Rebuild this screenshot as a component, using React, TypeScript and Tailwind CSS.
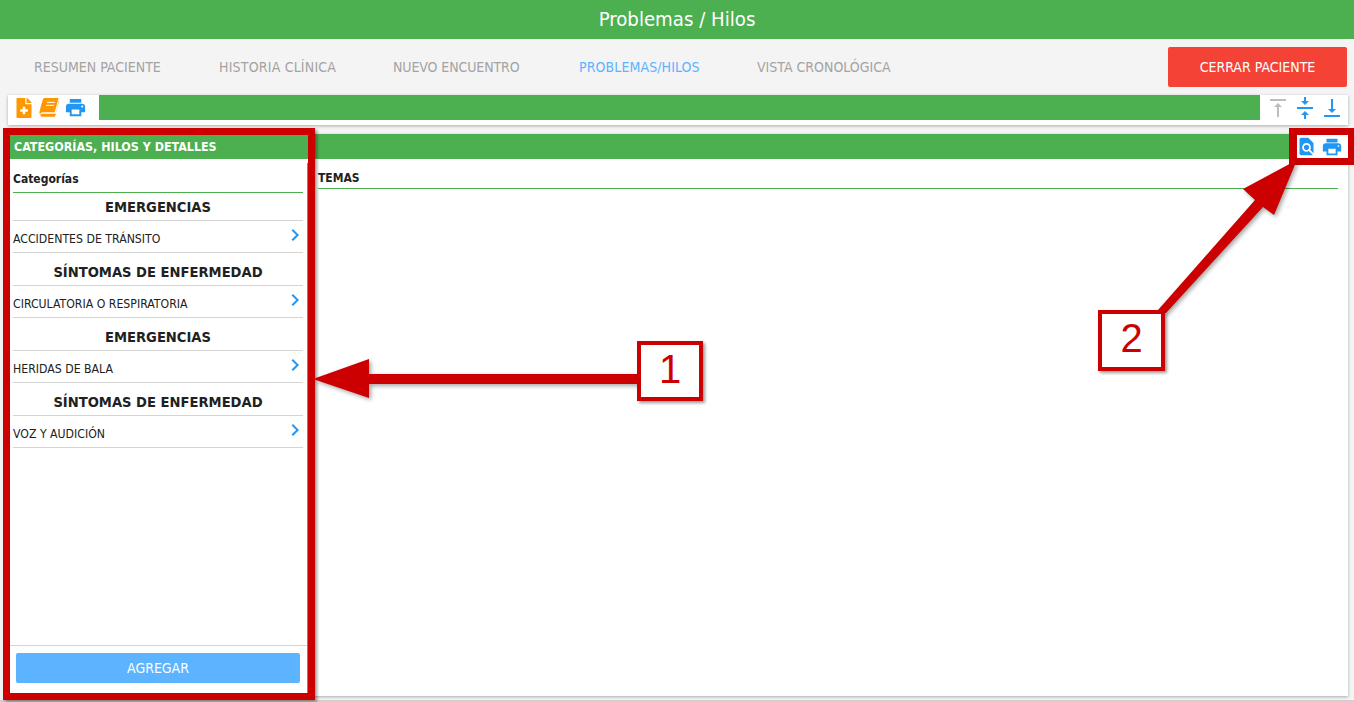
import React from "react";
import { FaFileMedical } from "react-icons/fa";
import {
  MdChevronRight,
  MdFindInPage,
  MdPrint,
  MdVerticalAlignBottom,
  MdVerticalAlignCenter,
  MdVerticalAlignTop,
} from "react-icons/md";

const tabs = [
  { label: "RESUMEN PACIENTE", width: "w-[185px]" },
  { label: "HISTORIA CLÍNICA", width: "w-[174px]", track: "tracking-[0.2px]" },
  { label: "NUEVO ENCUENTRO", width: "w-[186px]", track: "tracking-[-0.1px]" },
  { label: "PROBLEMAS/HILOS", width: "w-[178px]", active: true, track: "tracking-[0.1px]" },
  { label: "VISTA CRONOLÓGICA", width: "w-[160px]" },
];

const groups = [
  { title: "EMERGENCIAS", item: "ACCIDENTES DE TRÁNSITO" },
  { title: "SÍNTOMAS DE ENFERMEDAD", item: "CIRCULATORIA O RESPIRATORIA" },
  { title: "EMERGENCIAS", item: "HERIDAS DE BALA" },
  { title: "SÍNTOMAS DE ENFERMEDAD", item: "VOZ Y AUDICIÓN" },
];

// slanted book, the icon package's one stands upright
const BookIcon = () => (
  <svg viewBox="0 0 60 57" className="ml-[7px] h-[19px] w-[20px] shrink-0 text-[#ff9800]" fill="currentColor">
    <path d="M16 0 H59 L47 43 H12 Q5 43 3 50 Q0 45 2 38 L11 6 Q13 0 16 0 Z" />
    <path d="M59 8 L60 10 L48 56 H10 Q3 56 4 51 Q5 47 12 47 H50 Z" />
    <path d="M24 13 H48 M21 22 H45" stroke="#fff" strokeWidth="3" fill="none" />
  </svg>
);

const App = () => {
  return (
    <div className="relative h-[702px] w-full overflow-hidden bg-white font-['DejaVu_Sans_Condensed','DejaVu_Sans',sans-serif] text-[#212121]">
      {/* Header */}
      <div className="flex h-[39px] items-center justify-center bg-[#4caf50] text-[20.2px] text-white">
        Problemas / Hilos
      </div>

      {/* Tabs */}
      <div className="flex h-[56px] items-center bg-[#f4f4f4] pl-[34px] pr-[7px]">
        {tabs.map((tab) => (
          <div
            key={tab.label}
            className={`${tab.width} ${tab.track ?? ""} text-[14px] ${tab.active ? "text-[#5cb3ff]" : "text-[#a3a3a3]"}`}
          >
            {tab.label}
          </div>
        ))}
        <button className="ml-auto h-[40px] w-[179px] rounded-[2px] bg-[#f44336] text-[14px] text-white">
          CERRAR PACIENTE
        </button>
      </div>

      <div className="h-[607px] border-b-2 border-[#d0d0d0] bg-[#f4f4f4] pl-[8px] pr-[6px]">
        {/* Toolbar */}
        <div className="flex h-[30px] bg-white shadow-[0_1px_3px_rgba(0,0,0,0.3)]">
          <div className="flex h-[25px] w-[91px] items-center pl-[8px]">
            <FaFileMedical className="h-[20px] w-[16px] shrink-0 text-[#ff9800]" />
            <BookIcon />
            <MdPrint className="ml-[5px] h-[23px] w-[23px] shrink-0 text-[#2196f3]" />
          </div>
          <div className="h-[25px] flex-1 bg-[#4caf50]" />
          <div className="flex h-[25px] w-[88px] items-center gap-[3px] pl-[6px]">
            <MdVerticalAlignTop className="h-[24px] w-[24px] text-[#bdbdbd]" />
            <MdVerticalAlignCenter className="h-[24px] w-[24px] text-[#2196f3]" />
            <MdVerticalAlignBottom className="h-[24px] w-[24px] text-[#2196f3]" />
          </div>
        </div>

        {/* Main card */}
        <div className="mt-[9px] flex h-[562px] flex-col bg-white shadow-[0_1px_3px_rgba(0,0,0,0.3)]">
          <div className="flex h-[25px] shrink-0">
            <div className="flex flex-1 items-center bg-[#4caf50] pl-[6px] pt-[1px] text-[12.4px] font-bold text-white">
              CATEGORÍAS, HILOS Y DETALLES
            </div>
            <div className="flex w-[56px] items-center justify-end gap-[4px] bg-white pr-[5px]">
              <MdFindInPage className="h-[21px] w-[21px] text-[#2196f3]" />
              <MdPrint className="h-[22px] w-[22px] text-[#2196f3]" />
            </div>
          </div>

          <div className="flex min-h-0 flex-1">
            {/* Left column */}
            <div className="mt-[4px] flex w-[300px] shrink-0 flex-col border-r border-[#4caf50]">
              <div className="ml-[5px] mr-[4px] flex h-[30px] items-center border-b border-[#4caf50] pt-[2px] text-[12px] font-bold">
                Categorías
              </div>
              <div className="flex-1 pl-[5px] pr-[4px]">
                {groups.map((group, i) => (
                  <div key={i}>
                    <div className="flex h-[28px] items-center justify-center border-b border-[#d4d4d4] text-[14.6px] font-bold">
                      {group.title}
                    </div>
                    <div className="flex h-[32px] items-center justify-between border-b border-[#d4d4d4] text-[12.2px]">
                      <span className="pt-[5px]">{group.item}</span>
                      <MdChevronRight className="mb-[4px] mr-[-4px] h-[24px] w-[24px] text-[#2196f3]" />
                    </div>
                    <div className="h-[5px]" />
                  </div>
                ))}
              </div>
              <div className="flex h-[51px] border-t border-[#d4d4d4] pb-[13px] pl-[8px] pr-[7px] pt-[7px]">
                <button className="h-[30px] w-full rounded-[2px] bg-[#5cb3ff] text-[14px] text-white">
                  AGREGAR
                </button>
              </div>
            </div>

            {/* Right column */}
            <div className="flex-1 pl-[10px] pr-[10px]">
              <div className="h-[30px] border-b border-[#4caf50] pt-[11px] text-[12px] font-bold leading-[16px]">
                TEMAS
              </div>
            </div>
          </div>
        </div>
      </div>

      {/* Annotations laid over the screenshot */}
      <div className="absolute left-[3px] top-[128px] h-[572px] w-[312px] border-[7px] border-[#cc0000] shadow-[2px_2px_3px_rgba(0,0,0,0.4)]" />
      <div className="absolute left-[1289px] top-[128px] h-[37px] w-[65px] border-y-[7px] border-l-[8px] border-r-[6px] border-[#cc0000]" />
      <svg className="absolute left-0 top-0 h-[702px] w-[1354px] drop-shadow-[2px_2px_2px_rgba(0,0,0,0.35)]" viewBox="0 0 1354 702">
        <polygon points="313,379 369,359 369,374 640,374 640,384 369,384 369,398" fill="#cc0000" />
        <polygon points="1297,160 1274,215 1263,207 1166,313 1158,310 1255,200 1243,189" fill="#cc0000" />
      </svg>
      <div className="absolute left-[637px] top-[341px] flex h-[60px] w-[66px] items-center justify-center border-[4px] border-[#cc0000] bg-white pb-[5px] font-['Liberation_Sans',sans-serif] text-[40px] text-[#cc0000] shadow-[2px_2px_3px_rgba(0,0,0,0.4)]">
        1
      </div>
      <div className="absolute left-[1098px] top-[310px] flex h-[61px] w-[67px] items-center justify-center border-[4px] border-[#cc0000] bg-white pb-[5px] font-['Liberation_Sans',sans-serif] text-[40px] text-[#cc0000] shadow-[2px_2px_3px_rgba(0,0,0,0.4)]">
        2
      </div>
    </div>
  );
};

export default App;
